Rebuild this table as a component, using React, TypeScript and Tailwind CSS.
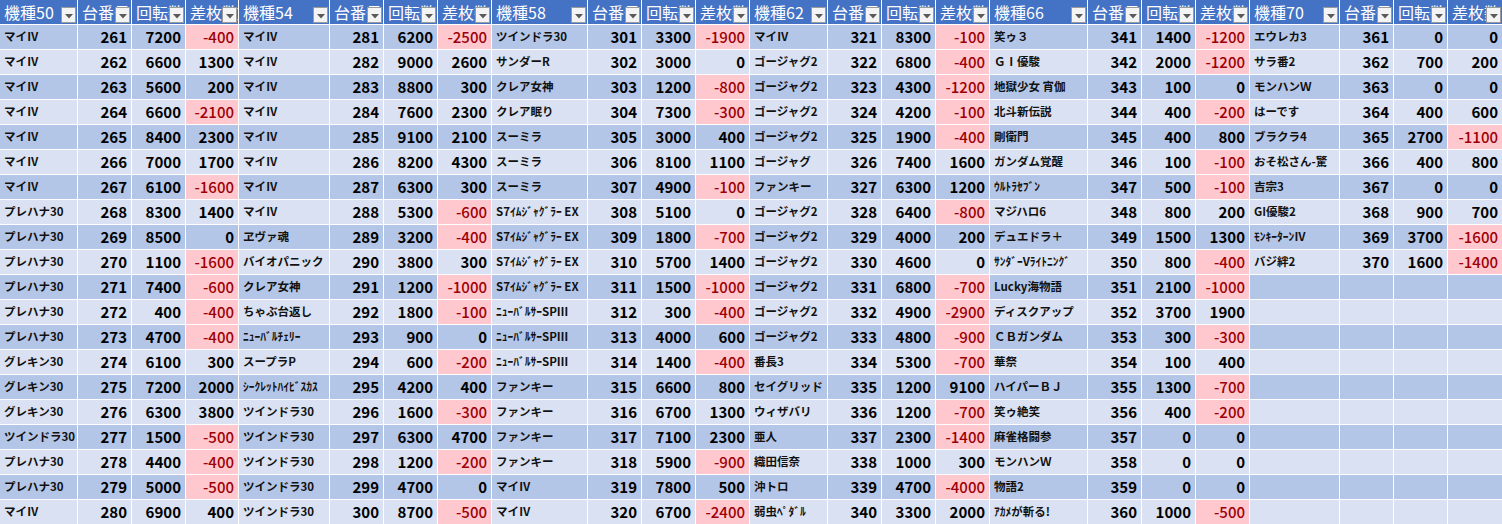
type Row = [string, number, number, number]

const groups: { title: string; rows: Row[] }[] = [
  {
    title: "機種50",
    rows: [
      ["マイⅣ", 261, 7200, -400],
      ["マイⅣ", 262, 6600, 1300],
      ["マイⅣ", 263, 5600, 200],
      ["マイⅣ", 264, 6600, -2100],
      ["マイⅣ", 265, 8400, 2300],
      ["マイⅣ", 266, 7000, 1700],
      ["マイⅣ", 267, 6100, -1600],
      ["プレハナ30", 268, 8300, 1400],
      ["プレハナ30", 269, 8500, 0],
      ["プレハナ30", 270, 1100, -1600],
      ["プレハナ30", 271, 7400, -600],
      ["プレハナ30", 272, 400, -400],
      ["プレハナ30", 273, 4700, -400],
      ["グレキン30", 274, 6100, 300],
      ["グレキン30", 275, 7200, 2000],
      ["グレキン30", 276, 6300, 3800],
      ["ツインドラ30", 277, 1500, -500],
      ["プレハナ30", 278, 4400, -400],
      ["プレハナ30", 279, 5000, -500],
      ["マイⅣ", 280, 6900, 400],
    ],
  },
  {
    title: "機種54",
    rows: [
      ["マイⅣ", 281, 6200, -2500],
      ["マイⅣ", 282, 9000, 2600],
      ["マイⅣ", 283, 8800, 300],
      ["マイⅣ", 284, 7600, 2300],
      ["マイⅣ", 285, 9100, 2100],
      ["マイⅣ", 286, 8200, 4300],
      ["マイⅣ", 287, 6300, 300],
      ["マイⅣ", 288, 5300, -600],
      ["ヱヴァ魂", 289, 3200, -400],
      ["バイオパニック", 290, 3800, 300],
      ["クレア女神", 291, 1200, -1000],
      ["ちゃぶ台返し", 292, 1800, -100],
      ["ﾆｭｰﾊﾞﾙﾁｪﾘｰ", 293, 900, 0],
      ["スープラP", 294, 600, -200],
      ["ｼｰｸﾚｯﾄﾊｲﾋﾞｽｶｽ", 295, 4200, 400],
      ["ツインドラ30", 296, 1600, -300],
      ["ツインドラ30", 297, 6300, 4700],
      ["ツインドラ30", 298, 1200, -200],
      ["ツインドラ30", 299, 4700, 0],
      ["ツインドラ30", 300, 8700, -500],
    ],
  },
  {
    title: "機種58",
    rows: [
      ["ツインドラ30", 301, 3300, -1900],
      ["サンダーR", 302, 3000, 0],
      ["クレア女神", 303, 1200, -800],
      ["クレア眠り", 304, 7300, -300],
      ["スーミラ", 305, 3000, 400],
      ["スーミラ", 306, 8100, 1100],
      ["スーミラ", 307, 4900, -100],
      ["S7ｲﾑｼﾞｬｸﾞﾗｰ EX", 308, 5100, 0],
      ["S7ｲﾑｼﾞｬｸﾞﾗｰ EX", 309, 1800, -700],
      ["S7ｲﾑｼﾞｬｸﾞﾗｰ EX", 310, 5700, 1400],
      ["S7ｲﾑｼﾞｬｸﾞﾗｰ EX", 311, 1500, -1000],
      ["ﾆｭｰﾊﾞﾙｻｰSPⅢ", 312, 300, -400],
      ["ﾆｭｰﾊﾞﾙｻｰSPⅢ", 313, 4000, 600],
      ["ﾆｭｰﾊﾞﾙｻｰSPⅢ", 314, 1400, -400],
      ["ファンキー", 315, 6600, 800],
      ["ファンキー", 316, 6700, 1300],
      ["ファンキー", 317, 7100, 2300],
      ["ファンキー", 318, 5900, -900],
      ["マイⅣ", 319, 7800, 500],
      ["マイⅣ", 320, 6700, -2400],
    ],
  },
  {
    title: "機種62",
    rows: [
      ["マイⅣ", 321, 8300, -100],
      ["ゴージャグ2", 322, 6800, -400],
      ["ゴージャグ2", 323, 4300, -1200],
      ["ゴージャグ2", 324, 4200, -100],
      ["ゴージャグ2", 325, 1900, -400],
      ["ゴージャグ", 326, 7400, 1600],
      ["ファンキー", 327, 6300, 1200],
      ["ゴージャグ2", 328, 6400, -800],
      ["ゴージャグ2", 329, 4000, 200],
      ["ゴージャグ2", 330, 4600, 0],
      ["ゴージャグ2", 331, 6800, -700],
      ["ゴージャグ2", 332, 4900, -2900],
      ["ゴージャグ2", 333, 4800, -900],
      ["番長3", 334, 5300, -700],
      ["セイグリッド", 335, 1200, 9100],
      ["ウィザバリ", 336, 1200, -700],
      ["亜人", 337, 2300, -1400],
      ["織田信奈", 338, 1000, 300],
      ["沖トロ", 339, 4700, -4000],
      ["弱虫ﾍﾟﾀﾞﾙ", 340, 3300, 2000],
    ],
  },
  {
    title: "機種66",
    rows: [
      ["笑ゥ３", 341, 1400, -1200],
      ["ＧⅠ優駿", 342, 2000, -1200],
      ["地獄少女 宵伽", 343, 100, 0],
      ["北斗新伝説", 344, 400, -200],
      ["剛衛門", 345, 400, 800],
      ["ガンダム覚醒", 346, 100, -100],
      ["ｳﾙﾄﾗｾﾌﾞﾝ", 347, 500, -100],
      ["マジハロ6", 348, 800, 200],
      ["デュエドラ＋", 349, 1500, 1300],
      ["ｻﾝﾀﾞｰVﾗｲﾄﾆﾝｸﾞ", 350, 800, -400],
      ["Lucky海物語", 351, 2100, -1000],
      ["ディスクアップ", 352, 3700, 1900],
      ["ＣＢガンダム", 353, 300, -300],
      ["華祭", 354, 100, 400],
      ["ハイパーＢＪ", 355, 1300, -700],
      ["笑ゥ絶笑", 356, 400, -200],
      ["麻雀格闘参", 357, 0, 0],
      ["モンハンＷ", 358, 0, 0],
      ["物語2", 359, 0, 0],
      ["ｱｶﾒが斬る!", 360, 1000, -500],
    ],
  },
  {
    title: "機種70",
    rows: [
      ["エウレカ3", 361, 0, 0],
      ["サラ番2", 362, 700, 200],
      ["モンハンＷ", 363, 0, 0],
      ["はーです", 364, 400, 600],
      ["ブラクラ4", 365, 2700, -1100],
      ["おそ松さん-驚", 366, 400, 800],
      ["吉宗3", 367, 0, 0],
      ["GI優駿2", 368, 900, 700],
      ["ﾓﾝｷｰﾀｰﾝⅣ", 369, 3700, -1600],
      ["バジ絆2", 370, 1600, -1400],
    ],
  },
]

const headers = ["台番号", "回転数", "差枚数"]

function FilterButton() {
  return (
    <span className="absolute right-px bottom-px w-[15px] h-[16px] bg-[#f4f4f4] border border-[#9a9a9a] flex items-center justify-center">
      <svg width="8" height="5" viewBox="0 0 8 5" className="mt-[2px]">
        <path d="M0 0h8L4 4.5z" fill="#5a5a5a" />
      </svg>
    </span>
  )
}

function HeaderCell({ label }: { label: string }) {
  return (
    <div className="relative bg-[#4472c4] text-white text-[16px] leading-[24px] pl-[4px] overflow-hidden whitespace-nowrap">
      {label}
      <FilterButton />
    </div>
  )
}

export default function App() {
  const rowCount = 20
  return (
    <div className="w-[1502px] h-[524px] overflow-hidden bg-white font-['Noto_Sans_CJK_JP',sans-serif]">
      <div className="grid gap-px grid-cols-[77px_53px_53px_52px_90px_53px_53px_53px_95px_53px_53px_53px_77px_53px_53px_53px_97px_53px_53px_53px_89px_53px_53px_54px] grid-rows-[24px_repeat(20,24px)]">
        {groups.map((g) => (
          <div key={g.title} className="contents">
            <HeaderCell label={g.title} />
            {headers.map((h) => (
              <HeaderCell key={h} label={h} />
            ))}
          </div>
        ))}

        {Array.from({ length: rowCount }).map((_, r) => {
          const rowBg = r % 2 === 0 ? "bg-[#b4c6e7]" : "bg-[#d9e1f2]"
          return (
            <div key={r} className="contents">
              {groups.map((g) => {
                const row = g.rows[r]
                if (!row) {
                  return (
                    <div key={g.title} className="contents">
                      <div className={rowBg} />
                      <div className={rowBg} />
                      <div className={rowBg} />
                      <div className={rowBg} />
                    </div>
                  )
                }
                const [name, no, spins, diff] = row
                const neg = diff < 0
                return (
                  <div key={g.title} className="contents">
                    <div
                      className={`${rowBg} text-[11.5px] font-bold text-[#111] pl-[4px] flex items-center whitespace-nowrap overflow-hidden`}
                    >
                      {name}
                    </div>
                    <div className={`${rowBg} text-[15px] font-bold text-black pr-[4px] flex items-center justify-end`}>
                      {no}
                    </div>
                    <div className={`${rowBg} text-[15px] font-bold text-black pr-[4px] flex items-center justify-end`}>
                      {spins}
                    </div>
                    <div
                      className={`${
                        neg ? "bg-[#ffc7ce] text-[#9c0006] font-medium" : `${rowBg} text-black font-bold`
                      } text-[15px] pr-[4px] flex items-center justify-end`}
                    >
                      {diff}
                    </div>
                  </div>
                )
              })}
            </div>
          )
        })}
      </div>
    </div>
  )
}
